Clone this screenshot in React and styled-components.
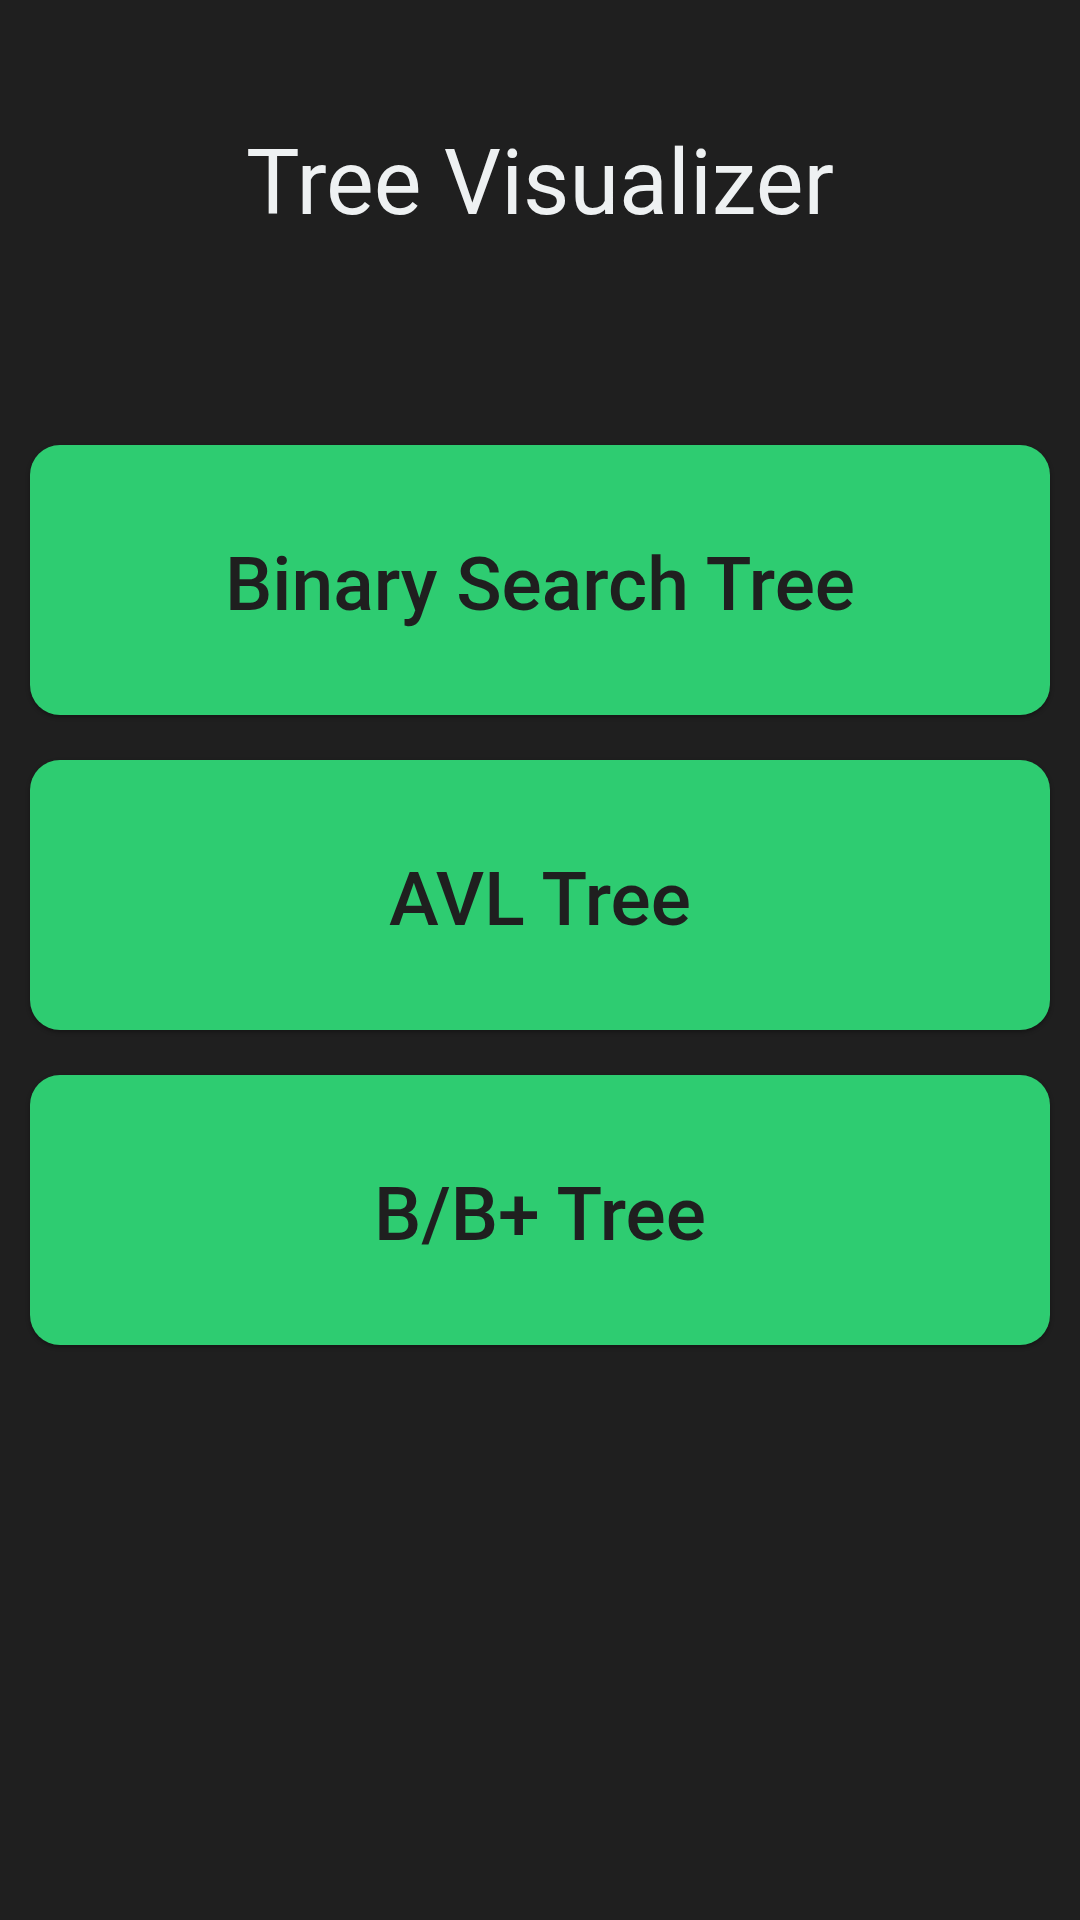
import React from "react";
import styled, { createGlobalStyle } from "styled-components";

const GlobalStyle = createGlobalStyle`
  html, body {
    margin: 0;
    padding: 0;
    background-color: #1f1f1f;
  }
  body {
    font-family: Roboto, "Liberation Sans", sans-serif;
  }
`;

const Screen = styled.div`
  min-height: 1920px;
  display: flex;
  flex-direction: column;
  background-color: #1f1f1f;
`;

const Title = styled.h1`
  margin: 0;
  padding-top: 132px;
  text-align: center;
  font-size: 90px;
  font-weight: 400;
  line-height: 104px;
  color: #eef1f2;
`;

const Menu = styled.div`
  display: flex;
  flex-direction: column;
  gap: 45px;
  padding: 0 30px;
  margin-top: 209px;
`;

const TreeButton = styled.button`
  height: 270px;
  width: 100%;
  border: none;
  border-radius: 30px;
  padding: 7px 0 0;
  background-color: #2ecc71;
  color: #1f1f1f;
  font-family: Roboto, "Liberation Sans", sans-serif;
  font-size: 75px;
  font-weight: 500;
  display: flex;
  align-items: center;
  justify-content: center;
  box-shadow: 0 2px 4px rgba(0, 0, 0, 0.35);
  cursor: pointer;
`;

const trees = ["Binary Search Tree", "AVL Tree", "B/B+ Tree"];

export default function App() {
  return (
    <>
      <GlobalStyle />
      <Screen>
        <Title>Tree Visualizer</Title>
        <Menu>
          {trees.map((name) => (
            <TreeButton key={name}>{name}</TreeButton>
          ))}
        </Menu>
      </Screen>
    </>
  );
}
